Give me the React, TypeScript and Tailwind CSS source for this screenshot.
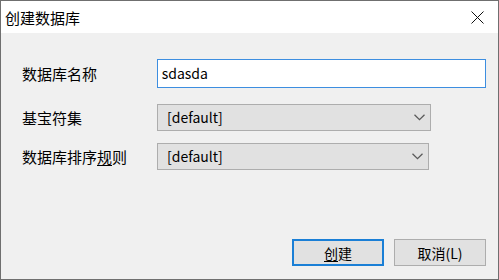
import React from "react";

const Chevron = () => (
  <svg width="11" height="7" viewBox="0 0 11 7" fill="none">
    <path d="M0.5 0.8 L5.5 5.6 L10.5 0.8" stroke="#5a5a5a" strokeWidth="1.3" />
  </svg>
);

const Select = ({ width }: { width: string }) => (
  <div
    className={`${width} h-[27px] bg-[#e1e1e1] border border-[#adadad] flex items-center justify-between pl-[9px] pr-[5px] text-[14px] text-black`}
  >
    <span>[default]</span>
    <Chevron />
  </div>
);

export default function App() {
  return (
    <div
      className="w-[499px] h-[280px] border border-[#6f6f6f] bg-[#f0f0f0] flex flex-col text-black"
      style={{ fontFamily: '"Noto Sans CJK SC", "Noto Sans", sans-serif' }}
    >
      <div className="h-[32px] bg-white flex items-center justify-between pl-[4px] pr-[14px] shrink-0">
        <span className="text-[15px] leading-none">创建数据库</span>
        <svg width="13" height="13" viewBox="0 0 13 13">
          <path d="M0.5 0.5 L12.5 12.5 M12.5 0.5 L0.5 12.5" stroke="#111" strokeWidth="1" />
        </svg>
      </div>

      <div className="flex-1 flex flex-col pl-[21px] pt-[26px] pr-[12px] pb-[13px]">
        <div className="flex items-center h-[29px]">
          <span className="w-[135px] text-[15px] leading-none">数据库名称</span>
          <div className="w-[330px] h-[29px] bg-white border border-[#3d8ee0] flex items-center pl-[4px] text-[14px]">
            sdasda
          </div>
        </div>

        <div className="flex items-center h-[27px] mt-[16px]">
          <span className="w-[135px] text-[15px] leading-none">基宝符集</span>
          <Select width="w-[274px]" />
        </div>

        <div className="flex items-center h-[27px] mt-[12px]">
          <span className="w-[135px] text-[15px] leading-none">
            数据库排序<span className="underline underline-offset-2">规</span>则
          </span>
          <Select width="w-[272px]" />
        </div>

        <div className="mt-auto flex justify-end gap-[10px]">
          <button className="w-[92px] h-[27px] bg-[#e1e1e1] border-2 border-[#1a7fd6] text-[14px] leading-none flex items-center justify-center">
            <span className="underline underline-offset-2">创</span>建
          </button>
          <button className="w-[92px] h-[27px] bg-[#e1e1e1] border border-[#adadad] text-[14px] leading-none flex items-center justify-center">
            取消(L)
          </button>
        </div>
      </div>
    </div>
  );
}
